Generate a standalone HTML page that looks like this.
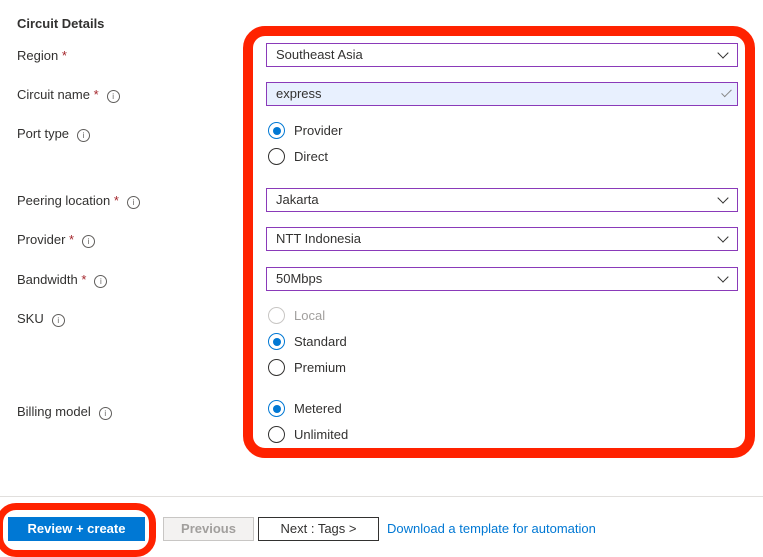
<!DOCTYPE html><html><head><style>
body{margin:0;width:763px;height:548px;background:#fff;font-family:"Liberation Sans",sans-serif;font-size:13px;color:#323130;position:relative;overflow:hidden}
.a{position:absolute}
.lbl{left:17px}
.s{color:#a4262c}
.i{display:inline-block;width:11px;height:11px;border:1px solid #605e5c;border-radius:50%;font-size:8px;line-height:11px;text-align:center;margin-left:8px;vertical-align:0px;color:#605e5c}
.in{left:266px;width:470px;height:22px;border:1px solid #8a3ab9;line-height:22px;text-indent:9px}
.chev{position:absolute;right:10px;top:5px;width:7px;height:7px;border-right:1.3px solid #323130;border-bottom:1.3px solid #323130;transform:rotate(45deg)}
.r{left:268px;width:17px;height:17px;border:1px solid #323130;border-radius:50%;box-sizing:border-box}
.r.on{border-color:#0078d4}
.r.on:after{content:"";position:absolute;left:3.5px;top:3.5px;width:8px;height:8px;border-radius:50%;background:#0078d4}
.r.dis{border-color:#c8c6c4}
.rt{left:294px}
</style></head><body>
<div class="a" style="left:17px;top:16px;font-weight:bold">Circuit Details</div>
<div class="a lbl" style="top:48px">Region <span class="s">*</span></div>
<div class="a lbl" style="top:87px">Circuit name <span class="s">*</span><span class="i">i</span></div>
<div class="a lbl" style="top:126px">Port type<span class="i">i</span></div>
<div class="a lbl" style="top:193px">Peering location <span class="s">*</span><span class="i">i</span></div>
<div class="a lbl" style="top:232px">Provider <span class="s">*</span><span class="i">i</span></div>
<div class="a lbl" style="top:272px">Bandwidth <span class="s">*</span><span class="i">i</span></div>
<div class="a lbl" style="top:311px">SKU<span class="i">i</span></div>
<div class="a lbl" style="top:404px">Billing model<span class="i">i</span></div>

<div class="a" style="left:243px;top:26px;width:492px;height:412px;border:10px solid #ff2200;border-radius:22px"></div>

<div class="a in" style="top:43px">Southeast Asia<span class="chev"></span></div>
<div class="a in" style="top:82px;background:#e8f0fe">express<span class="a" style="right:8px;top:4px;width:4px;height:9px;border-right:1px solid #888;border-bottom:1px solid #888;transform:rotate(45deg)"></span></div>
<div class="a r on" style="top:122px"></div><div class="a rt" style="top:123px">Provider</div>
<div class="a r" style="top:148px"></div><div class="a rt" style="top:149px">Direct</div>
<div class="a in" style="top:188px">Jakarta<span class="chev"></span></div>
<div class="a in" style="top:227px">NTT Indonesia<span class="chev"></span></div>
<div class="a in" style="top:267px">50Mbps<span class="chev"></span></div>
<div class="a r dis" style="top:307px"></div><div class="a rt" style="top:308px;color:#a19f9d">Local</div>
<div class="a r on" style="top:333px"></div><div class="a rt" style="top:334px">Standard</div>
<div class="a r" style="top:359px"></div><div class="a rt" style="top:360px">Premium</div>
<div class="a r on" style="top:400px"></div><div class="a rt" style="top:401px">Metered</div>
<div class="a r" style="top:426px"></div><div class="a rt" style="top:427px">Unlimited</div>

<div class="a" style="left:0;top:496px;width:763px;height:1px;background:#e1dfdd"></div>
<div class="a" style="left:-4px;top:503px;width:146px;height:40px;border:7px solid #ff2200;border-radius:20px"></div>
<div class="a" style="left:8px;top:517px;width:137px;height:24px;background:#0078d4;color:#fff;font-weight:bold;text-align:center;line-height:24px">Review + create</div>
<div class="a" style="left:163px;top:517px;width:89px;height:22px;border:1px solid #c8c6c4;background:#f3f2f1;color:#a19f9d;text-align:center;line-height:22px;font-weight:bold">Previous</div>
<div class="a" style="left:258px;top:517px;width:119px;height:22px;border:1px solid #323130;text-align:center;line-height:22px">Next : Tags &gt;</div>
<div class="a" style="left:387px;top:521px;color:#0078d4">Download a template for automation</div>
</body></html>
